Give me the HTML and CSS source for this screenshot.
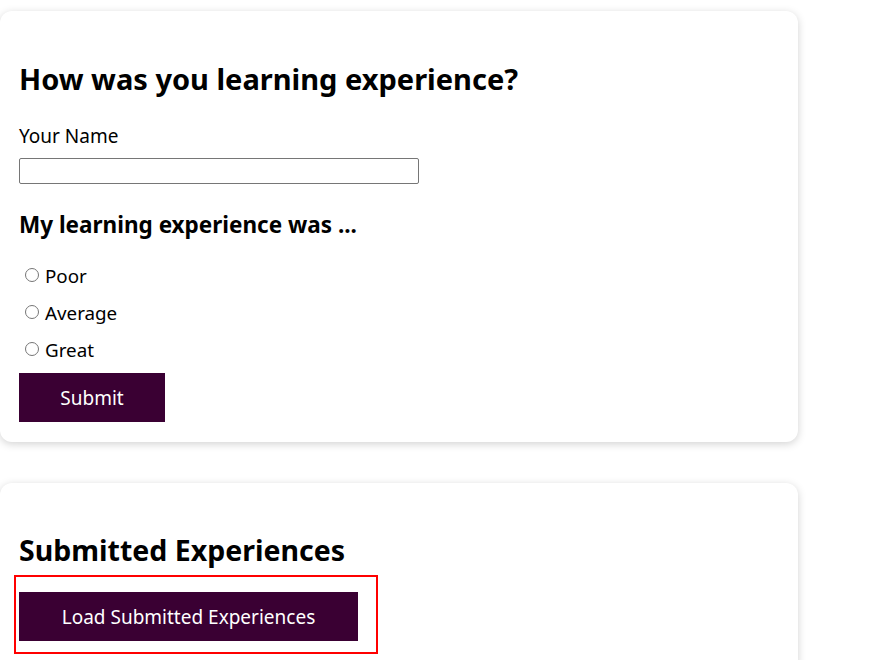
FILE: index.html
```html
<!DOCTYPE html>
<html>
<head>
<meta charset="utf-8">
<link rel="stylesheet" href="styles.css">
</head>
<body>
<div class="page">
  <section class="card card-form">
    <h1 class="title">How was you learning experience?</h1>
    <form class="form">
      <label class="field-label" for="name">Your Name</label>
      <input class="text-input" id="name" type="text">
      <h2 class="subtitle">My learning experience was ...</h2>
      <div class="options">
        <label class="option"><input type="radio" name="rating" class="radio"><span>Poor</span></label>
        <label class="option"><input type="radio" name="rating" class="radio"><span>Average</span></label>
        <label class="option"><input type="radio" name="rating" class="radio"><span>Great</span></label>
      </div>
      <button type="button" class="btn btn-submit">Submit</button>
    </form>
  </section>
  <section class="card card-list">
    <h1 class="title title-list">Submitted Experiences</h1>
    <div class="highlight">
      <button type="button" class="btn btn-load">Load Submitted Experiences</button>
    </div>
  </section>
</div>
</body>
</html>
```

FILE: styles.css
```css
html, body {
  margin: 0;
  padding: 0;
  background: #ffffff;
}
body {
  font-family: "Noto Sans", "Noto Sans CJK KR", sans-serif;
  color: #000;
}
.page {
  display: flex;
  flex-direction: column;
  gap: 41px;
  padding-top: 11px;
  width: 798px;
}
.card {
  background: #fff;
  border-radius: 12px;
  box-shadow: 0 2px 8px rgba(0,0,0,0.18);
  padding: 0 20px 20px 19px;
}
.title {
  font-size: 29px;
  font-weight: 700;
  margin: 0;
  padding-top: 48px;
  line-height: 40px;
}
.title-list {
  padding-top: 47px;
  font-size: 28.5px;
}
.form {
  display: flex;
  flex-direction: column;
  align-items: flex-start;
}
.field-label {
  font-size: 19px;
  margin-top: 24px;
  line-height: 26px;
}
.text-input {
  width: 400px;
  height: 26px;
  box-sizing: border-box;
  border: 1px solid #767676;
  border-radius: 2px;
  margin: 9px 0 0 0;
}
.subtitle {
  font-size: 22.5px;
  font-weight: 700;
  margin: 25px 0 0 0;
  line-height: 32px;
}
.options {
  display: flex;
  flex-direction: column;
  margin-top: 22px;
  gap: 11px;
}
.option {
  display: flex;
  align-items: center;
  font-size: 18.8px;
  line-height: 26px;
}
.radio {
  margin: -2px 6px 0 6px;
  width: 14px;
  height: 14px;
}
.btn {
  background: #3a0033;
  color: #fff;
  border: none;
  font-family: inherit;
  font-size: 19px;
  height: 49px;
  cursor: pointer;
}
.btn-submit {
  width: 146px;
  margin-top: 10px;
}
.highlight {
  border: 2px solid #ff0000;
  margin: 5px 0 0 -5px;
  padding: 15px 18px 11px 3px;
  width: fit-content;
}
.btn-load {
  width: 339px;
  display: block;
}
```
